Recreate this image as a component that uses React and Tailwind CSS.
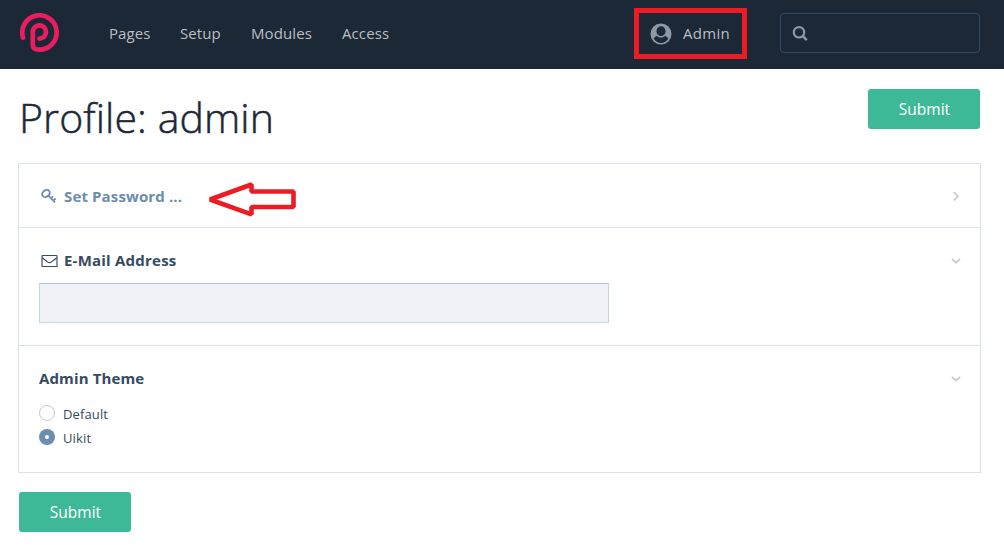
const NAV = [
  { label: 'Pages', box: 'w-[71px]', tracking: 'tracking-[0.1px]' },
  { label: 'Setup', box: 'w-[71px]', tracking: 'tracking-[0.1px]' },
  { label: 'Modules', box: 'w-[91px]', tracking: 'tracking-[0.1px]' },
  { label: 'Access', box: 'w-[60px]', tracking: 'tracking-[0.1px]' },
];

function Logo() {
  return (
    <svg className="ml-[19px] h-10 w-[41px] shrink-0" viewBox="19 13 41 40" fill="none" stroke="#eb1d61" strokeWidth="4.7" strokeLinecap="round" strokeLinejoin="round">
      <path d="M23 37.6 A17.2 17.2 0 1 1 39.3 49.7 Q32.8 49.7 32.8 45 V32.7 A6.600 6.600 0 1 1 39.400 38.600" />
    </svg>
  );
}

function UserIcon() {
  return (
    <svg className="h-[22px] w-[22px] shrink-0" viewBox="0 0 22 22">
      <circle cx="11" cy="11" r="10.500" fill="#8d97a5" />
      <path fill="#1d2836" d="M11 20c-3 0-5.800-1.700-7.200-4.200.6-1.600 1.700-2.500 3.300-2.800 1.100 1 2.400 1.500 3.900 1.500s2.800-.5 3.900-1.500c1.600.3 2.700 1.200 3.300 2.800C16.800 18.300 14 20 11 20z" />
      <ellipse cx="11" cy="8.200" rx="4.500" ry="4.900" fill="#1d2836" />
    </svg>
  );
}

function KeyIcon() {
  return (
    <svg className="h-4 w-4 shrink-0" viewBox="0 0 16 16" fill="none" stroke="#6c8dae" strokeLinejoin="round">
      <ellipse cx="5" cy="5.500" rx="4.100" ry="3.200" transform="rotate(-38 5 5.500)" strokeWidth="1.900" />
      <path d="M7.400 7.600L14 14.400M12.200 12.600L14.700 10.500M9.800 10.300L12.200 8.300" strokeWidth="1.700" />
    </svg>
  );
}

function MailIcon() {
  return (
    <svg className="h-[14px] w-[17px] shrink-0" viewBox="0 0 17 14" fill="none" stroke="#354b60" strokeWidth="1.150">
      <rect x="1" y="1.500" width="15" height="11" rx="0.600" />
      <path d="M1.300 3.700C3.300 5.500 5 6.700 6.900 8.100c1.200.9 2 .9 3.200 0C12 6.700 13.700 5.500 15.700 3.700" />
    </svg>
  );
}

function Chevron({ open }) {
  return (
    <svg className="h-3 w-3 shrink-0" viewBox="0 0 12 12" fill="none" stroke="#c3c8ce" strokeWidth="1.600">
      <path d={open ? 'M1.800 3.800L6 7.700L10.200 3.800' : 'M3.800 2L8 6.200L3.800 10.400'} />
    </svg>
  );
}

function Submit() {
  return (
    <button className="flex h-10 w-28 shrink-0 items-center justify-center rounded-[3px] bg-[#3eb998] pt-px pl-px text-[15.5px] text-white">
      Submit
    </button>
  );
}

export default function App() {
  return (
    <div className="h-[554px] w-[1004px] overflow-hidden bg-white font-['Open_Sans','Noto_Sans',sans-serif] text-[#354b60]">
      <header className="flex h-[69px] items-start bg-[#1d2836]">
        <div className="flex h-[66px] items-center">
          <Logo />
          <nav className="ml-[49px] flex text-[15px] leading-6 text-[#bbbfc4]">
            {NAV.map((n) => (
              <a key={n.label} className={`${n.box} ${n.tracking} whitespace-nowrap`}>{n.label}</a>
            ))}
          </nav>
        </div>
        <div className="mt-2 ml-[232px] flex h-[51px] w-[113px] shrink-0 items-center border-[5px] border-[#ed1c24] pl-[11px]">
          <UserIcon />
          <span className="ml-[11px] text-[15px] tracking-[0.3px] text-[#bbbfc4]">Admin</span>
        </div>
        <div className="mt-[13px] ml-[33px] flex h-10 w-[200px] shrink-0 items-center rounded-[4px] border border-[#314863] pl-[11px]">
          <svg className="h-4 w-4" viewBox="0 0 16 16" fill="none" stroke="#8d97a5">
            <circle cx="7" cy="7.300" r="5.200" strokeWidth="2.200" />
            <path d="M10.900 11.200L14 14.300" strokeWidth="2.600" strokeLinecap="round" />
          </svg>
        </div>
      </header>

      <main className="pr-6 pl-[19px]">
        <div className="flex h-[94px] items-start justify-between pt-5">
          <h1 className="-mt-px text-[41px] leading-[58px] font-light tracking-[0.1px] whitespace-nowrap text-[#1d2836] [-webkit-text-stroke:0.5px_#1d2836]">Profile: admin</h1>
          <Submit />
        </div>

        <div className="-mr-px -ml-px border border-[#d9e1ea] text-[15px] font-bold tracking-[0.13px]">
          <section className="flex h-16 items-center justify-between border-b border-[#d9e1ea] pr-[18px] pl-[22px]">
            <div className="flex items-center text-[#6c8dae]">
              <KeyIcon />
              <span className="mt-[2px] ml-[7px] w-[118px] whitespace-nowrap">Set Password ...</span>
              <svg className="mt-[6px] ml-[25px] h-9 w-[90px]" viewBox="207 181 90 36" fill="none" stroke="#ed1c24" strokeWidth="4.600" strokeLinejoin="bevel">
                <path d="M210 199.500L251.500 184.500V191.500H293.500V207H251.500V214.300Z" />
              </svg>
            </div>
            <Chevron />
          </section>
          <section className="h-[118px] border-b border-[#d9e1ea] pr-[18px] pl-5">
            <div className="flex h-[55px] items-center justify-between pt-[11px]">
              <div className="flex items-center pl-[2px]">
                <MailIcon />
                <span className="-mt-[2px] ml-[6px] tracking-[0.22px]">E-Mail Address</span>
              </div>
              <Chevron open />
            </div>
            <div className="h-10 w-[570px] border border-[#c5d5e4] border-t-[#afc3d6] bg-[#eff3f8]" />
          </section>
          <section className="h-[126px] pr-[18px] pl-5">
            <div className="flex h-[55px] items-center justify-between pt-[11px]">
              <span className="-mt-[2px]">Admin Theme</span>
              <Chevron open />
            </div>
            <div className="flex flex-col text-[13px] leading-6 font-normal">
              <label className="flex h-6 items-center">
                <span className="h-4 w-4 rounded-full border border-[#c8c8c8]" />
                <span className="mt-[2px] ml-2">Default</span>
              </label>
              <label className="flex h-6 items-center">
                <span className="flex h-4 w-4 items-center justify-center rounded-full bg-[#6c8dae]">
                  <span className="h-1 w-1 rounded-full bg-white" />
                </span>
                <span className="mt-[2px] ml-2">Uikit</span>
              </label>
            </div>
          </section>
        </div>
        <div className="mt-[19px]"><Submit /></div>
      </main>
    </div>
  );
}
